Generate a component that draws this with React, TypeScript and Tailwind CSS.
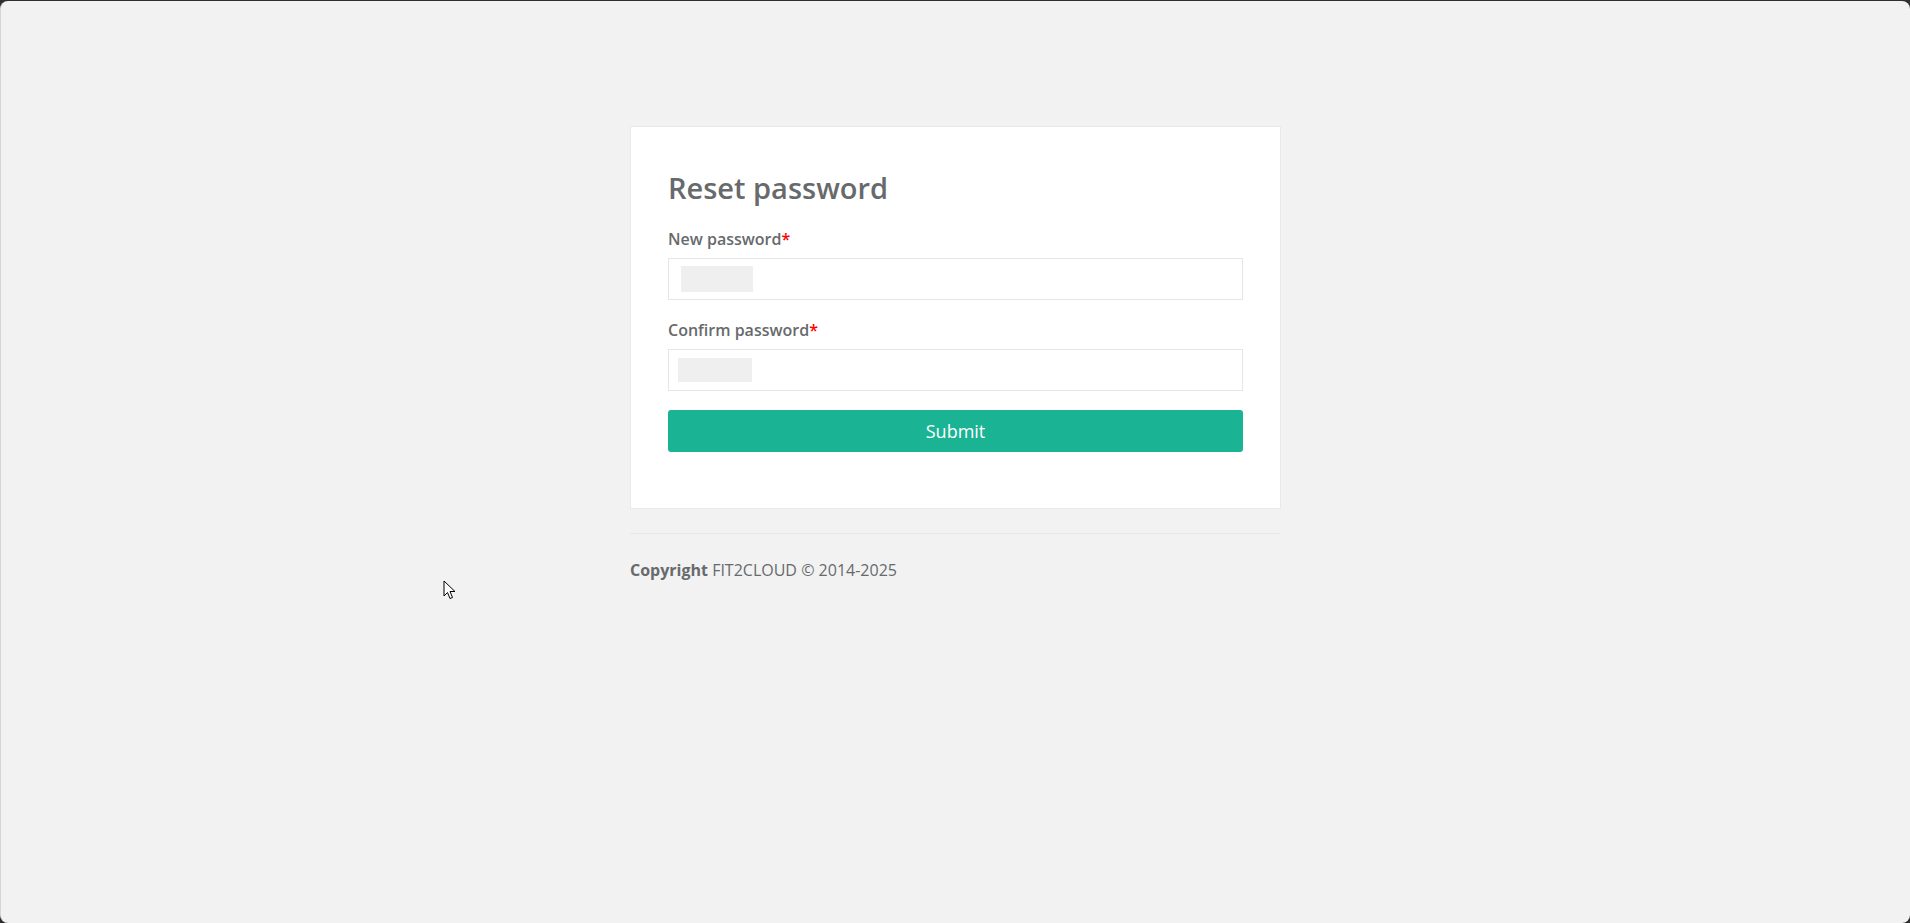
export default function App() {
  return (
    <div className="h-[923px] w-full bg-[#2f2f2f] overflow-hidden">
      <div
        className="relative mt-px h-[922px] w-full rounded-[8px] border-l border-[#d6d6d6] bg-[#f2f2f2] text-[#676a6c]"
        style={{ fontFamily: '"Open Sans", "Liberation Sans", sans-serif' }}
      >
        <div className="ml-[629px] w-[651px] pt-[125px]">
          {/* Card */}
          <div className="border border-[#e7eaec] bg-white px-[37px] pt-[41px] pb-[56px]">
            <h2 className="text-[29px] leading-[40px] font-semibold text-[#676a6c]">Reset password</h2>

            <div className="mt-[20px]">
              <label className="block text-[16px] leading-[22px] font-semibold text-[#676a6c]">
                New password<span className="text-[#ff0000]">*</span>
              </label>
              <div className="mt-[8px] flex h-[42px] items-center border border-[#e5e6e7] bg-white px-[12px]">
                <div className="h-[26px] w-[72px] bg-[#efefef]" />
              </div>
            </div>

            <div className="mt-[19px]">
              <label className="block text-[16px] leading-[22px] font-semibold text-[#676a6c]">
                Confirm password<span className="text-[#ff0000]">*</span>
              </label>
              <div className="mt-[8px] flex h-[42px] items-center border border-[#e5e6e7] bg-white px-[9px]">
                <div className="h-[24px] w-[74px] bg-[#efefef]" />
              </div>
            </div>

            <button className="mt-[19px] flex h-[42px] w-full items-center justify-center rounded-[3px] bg-[#1ab394] text-[18px] text-white">
              Submit
            </button>
          </div>

          {/* Footer */}
          <div className="mt-[24px] border-t border-[#e8e8e8] pt-[25px] text-[16px] leading-[22px]">
            <span className="font-bold">Copyright</span> FIT2CLOUD © 2014-2025
          </div>
        </div>

        {/* Mouse cursor */}
        <svg className="absolute left-[442px] top-[579px]" width="14" height="21" viewBox="0 0 14 21">
          <path d="M1 1 L1 16 L4.5 12.5 L7 18.5 L9.5 17.5 L7 11.5 L12 11.5 Z" fill="#fff" stroke="#000" strokeWidth="1" strokeLinejoin="round" />
        </svg>
      </div>
    </div>
  );
}
